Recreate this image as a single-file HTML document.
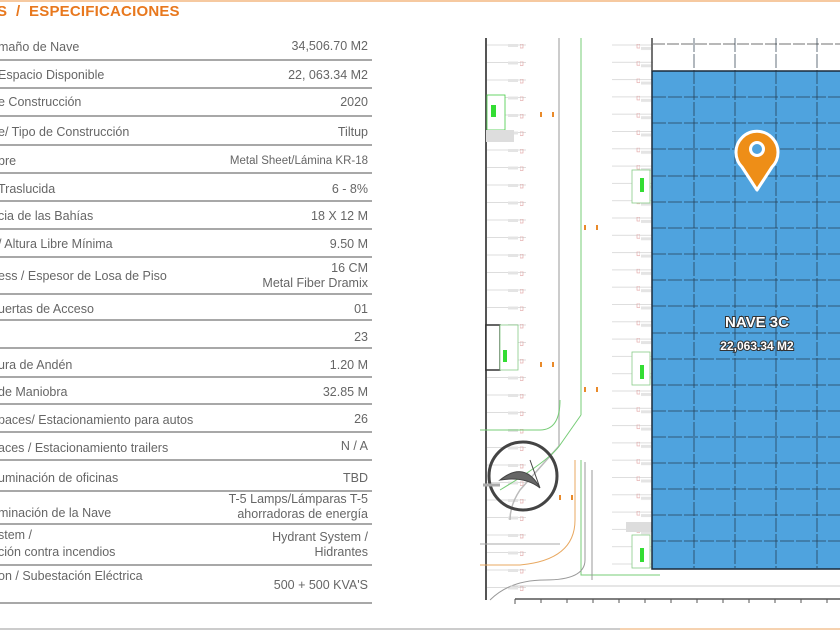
<!DOCTYPE html>
<html><head><meta charset="utf-8"><style>
body{margin:0;width:840px;height:630px;background:#fff;overflow:hidden;position:relative;font-family:"Liberation Sans",sans-serif;}
.top{position:absolute;left:0;top:0;width:840px;height:2px;background:#f6c9a0}
.h{position:absolute;left:-3px;top:3px;font-size:15px;font-weight:bold;color:#e8781e;letter-spacing:0.2px}
.r{position:absolute;left:0;width:372px;border-bottom:2px solid #a8a8a8;color:#666;font-size:12.5px}
.r .l{position:absolute;left:-2px}
.r .v{position:absolute;right:4px;text-align:right;line-height:15px}
</style></head><body>
<div class="top"></div>
<div class="h">S&nbsp; /&nbsp; ESPECIFICACIONES</div>
<div class="r" style="top:30px;height:29px"><span class="l" style="top:10px">maño de Nave</span><span class="v" style="top:9px">34,506.70 M2</span></div>
<div class="r" style="top:61px;height:26px"><span class="l" style="top:7px">Espacio Disponible</span><span class="v" style="top:7px">22, 063.34 M2</span></div>
<div class="r" style="top:89px;height:26px"><span class="l" style="top:6px">e Construcción</span><span class="v" style="top:6px">2020</span></div>
<div class="r" style="top:117px;height:27px"><span class="l" style="top:8px">e/ Tipo de Construcción</span><span class="v" style="top:8px">Tiltup</span></div>
<div class="r" style="top:146px;height:26px"><span class="l" style="top:8px">bre</span><span class="v" style="top:8px;font-size:11.5px">Metal Sheet/Lámina KR-18</span></div>
<div class="r" style="top:174px;height:26px"><span class="l" style="top:8px">Traslucida</span><span class="v" style="top:8px">6 - 8%</span></div>
<div class="r" style="top:202px;height:26px"><span class="l" style="top:7px">cia de las Bahías</span><span class="v" style="top:7px">18 X 12 M</span></div>
<div class="r" style="top:230px;height:26px"><span class="l" style="top:7px">/ Altura Libre Mínima</span><span class="v" style="top:7px">9.50 M</span></div>
<div class="r" style="top:258px;height:35px"><span class="l" style="top:11px">ess / Espesor de Losa de Piso</span><span class="v" style="top:3px">16 CM<br>Metal Fiber Dramix</span></div>
<div class="r" style="top:295px;height:24px"><span class="l" style="top:7px">uertas de Acceso</span><span class="v" style="top:7px">01</span></div>
<div class="r" style="top:321px;height:26px"><span class="v" style="top:9px">23</span></div>
<div class="r" style="top:349px;height:27px"><span class="l" style="top:9px">ura de Andén</span><span class="v" style="top:9px">1.20 M</span></div>
<div class="r" style="top:378px;height:25px"><span class="l" style="top:7px">de Maniobra</span><span class="v" style="top:7px">32.85 M</span></div>
<div class="r" style="top:405px;height:26px"><span class="l" style="top:8px">paces/ Estacionamiento para autos</span><span class="v" style="top:7px">26</span></div>
<div class="r" style="top:433px;height:26px"><span class="l" style="top:8px">aces / Estacionamiento trailers</span><span class="v" style="top:6px">N / A</span></div>
<div class="r" style="top:461px;height:29px"><span class="l" style="top:10px">uminación de oficinas</span><span class="v" style="top:10px">TBD</span></div>
<div class="r" style="top:492px;height:31px"><span class="l" style="top:14px">minación de la Nave</span><span class="v" style="top:0px">T-5 Lamps/Lámparas T-5<br>ahorradoras de energía</span></div>
<div class="r" style="top:525px;height:39px"><span class="l" style="top:2px;line-height:17px">stem /<br>ción contra incendios</span><span class="v" style="top:5px">Hydrant System /<br>Hidrantes</span></div>
<div class="r" style="top:566px;height:36px"><span class="l" style="top:3px">on / Subestación Eléctrica</span><span class="v" style="top:12px">500 + 500 KVA'S</span></div>

<svg width="840" height="630" style="position:absolute;left:0;top:0" xmlns="http://www.w3.org/2000/svg">
<defs>
<pattern id="ps" x="0" y="44" width="40" height="17.3" patternUnits="userSpaceOnUse">
<line x1="0" y1="1" x2="40" y2="1" stroke="#ddd" stroke-width="1"/>
<rect x="1" y="3" width="10" height="3" fill="#e4e4e4"/>
<rect x="37" y="0" width="3" height="4" fill="none" stroke="#e0a0a0" stroke-width="0.6"/>
</pattern>
<pattern id="pl" x="0" y="44" width="40" height="17.5" patternUnits="userSpaceOnUse">
<line x1="0" y1="1" x2="40" y2="1" stroke="#ddd"/>
<rect x="0" y="0" width="3" height="4" fill="none" stroke="#e0a0a0" stroke-width="0.6"/>
<rect x="28" y="0" width="10" height="3" fill="#e4e4e4"/>
</pattern>
</defs>
<rect x="612" y="38" width="41" height="530" fill="url(#ps)"/>
<rect x="486" y="38" width="40" height="560" fill="url(#pl)"/>
<line x1="486" y1="38" x2="486" y2="600" stroke="#555" stroke-width="2"/>
<line x1="559" y1="38" x2="559" y2="446" stroke="#bbb" stroke-width="1.5"/>
<line x1="581" y1="38" x2="581" y2="415" stroke="#7c7" stroke-width="1"/>
<path d="M559 446 L520 490 Q510 505 510 520" fill="none" stroke="#bbb" stroke-width="1.5"/>
<path d="M581 415 L560 445 Q550 460 500 490" fill="none" stroke="#7c7"/>
<path d="M581 460 L581 575 L660 575" fill="none" stroke="#7c7"/>
<path d="M575 460 L575 520 Q575 560 520 565 L480 565" fill="none" stroke="#e8a860"/>
<path d="M585 462 L585 560 Q585 580 545 580 Q510 580 490 600" fill="none" stroke="#999"/>
<path d="M592 470 L592 580" fill="none" stroke="#999"/>
<path d="M480 430 L540 430 Q560 430 560 400" fill="none" stroke="#7c7"/>
<path d="M480 544 L560 544" fill="none" stroke="#aaa"/>
<rect x="487" y="95" width="18" height="35" fill="#fff" stroke="#4c4" stroke-width="0.8"/>
<rect x="491" y="105" width="5" height="12" fill="#3d3"/>
<rect x="486" y="130" width="28" height="12" fill="#ddd"/>
<rect x="486" y="325" width="14" height="45" fill="#fff" stroke="#333" stroke-width="1.5"/>
<rect x="500" y="325" width="18" height="45" fill="#fff" stroke="#8c8" stroke-width="0.8"/>
<rect x="503" y="350" width="4" height="12" fill="#3d3"/>
<rect x="632" y="170" width="18" height="33" fill="#fff" stroke="#8c8" stroke-width="0.8"/>
<rect x="640" y="178" width="4" height="14" fill="#3d3"/>
<rect x="632" y="352" width="18" height="33" fill="#fff" stroke="#8c8" stroke-width="0.8"/>
<rect x="640" y="365" width="4" height="14" fill="#3d3"/>
<rect x="632" y="535" width="18" height="33" fill="#fff" stroke="#8c8" stroke-width="0.8"/>
<rect x="640" y="548" width="4" height="14" fill="#3d3"/>
<rect x="626" y="522" width="26" height="10" fill="#ddd"/>
<g fill="#e98a2a"><rect x="540" y="112" width="2" height="5"/><rect x="552" y="112" width="2" height="5"/><rect x="584" y="225" width="2" height="5"/><rect x="596" y="225" width="2" height="5"/><rect x="540" y="362" width="2" height="5"/><rect x="552" y="362" width="2" height="5"/><rect x="584" y="387" width="2" height="5"/><rect x="596" y="387" width="2" height="5"/><rect x="559" y="495" width="2" height="5"/><rect x="571" y="495" width="2" height="5"/></g>
<circle cx="523" cy="476" r="34" fill="none" stroke="#444" stroke-width="3"/>
<path d="M500 480 Q525 460 540 488 Q525 476 500 480 Z M530 460 L540 488" fill="#666" stroke="#444"/>
<line x1="483" y1="485" x2="500" y2="485" stroke="#aaa" stroke-width="3"/>
<path d="M510 586 L840 586" stroke="#ccc"/>
<path d="M515 599 L840 599" stroke="#555" stroke-width="1.5"/>
<g stroke="#555">
<line x1="515" y1="599" x2="515" y2="604"/><line x1="541" y1="599" x2="541" y2="603"/><line x1="567" y1="599" x2="567" y2="603"/><line x1="593" y1="599" x2="593" y2="603"/><line x1="619" y1="599" x2="619" y2="603"/><line x1="645" y1="599" x2="645" y2="603"/><line x1="671" y1="599" x2="671" y2="603"/><line x1="697" y1="599" x2="697" y2="603"/><line x1="723" y1="599" x2="723" y2="603"/><line x1="749" y1="599" x2="749" y2="603"/><line x1="775" y1="599" x2="775" y2="603"/><line x1="801" y1="599" x2="801" y2="603"/><line x1="827" y1="599" x2="827" y2="603"/></g>
<rect x="652" y="71" width="190" height="498" fill="#4fa3de" stroke="#1a2a3a" stroke-width="1.5"/>
<line x1="653" y1="44" x2="840" y2="44" stroke="#444" stroke-dasharray="12 2" stroke-width="0.8"/>
<line x1="652" y1="38" x2="652" y2="71" stroke="#444" stroke-width="1.5"/>
<g stroke="#203040" stroke-width="0.8" stroke-dasharray="14 2" opacity="0.85">
<line x1="694" y1="38" x2="694" y2="568"/><line x1="735" y1="38" x2="735" y2="568"/><line x1="776" y1="38" x2="776" y2="568"/><line x1="817" y1="38" x2="817" y2="568"/>
<line x1="652" y1="97" x2="840" y2="97"/><line x1="652" y1="123" x2="840" y2="123"/><line x1="652" y1="149" x2="840" y2="149"/><line x1="652" y1="176" x2="840" y2="176"/><line x1="652" y1="202" x2="840" y2="202"/><line x1="652" y1="228" x2="840" y2="228"/><line x1="652" y1="254" x2="840" y2="254"/><line x1="652" y1="280" x2="840" y2="280"/><line x1="652" y1="306" x2="840" y2="306"/><line x1="652" y1="333" x2="840" y2="333"/><line x1="652" y1="359" x2="840" y2="359"/><line x1="652" y1="385" x2="840" y2="385"/><line x1="652" y1="411" x2="840" y2="411"/><line x1="652" y1="437" x2="840" y2="437"/><line x1="652" y1="463" x2="840" y2="463"/><line x1="652" y1="489" x2="840" y2="489"/><line x1="652" y1="515" x2="840" y2="515"/><line x1="652" y1="541" x2="840" y2="541"/>
</g>
<path d="M757 190 L742 167 A21 21 0 1 1 772 167 Z" fill="#ee8e17" stroke="#fff" stroke-width="3" stroke-linejoin="round"/>
<circle cx="757" cy="149" r="8" fill="#fff"/><circle cx="757" cy="149" r="5" fill="#4fa3de"/>
<g font-family="Liberation Sans,sans-serif" font-weight="bold" fill="#fff" text-anchor="middle" style="paint-order:stroke" stroke="#333" stroke-width="2">
<text x="757" y="327" font-size="15">NAVE 3C</text>
<text x="757" y="350" font-size="12">22,063.34 M2</text>
</g>
<line x1="0" y1="629" x2="620" y2="629" stroke="#ccc" stroke-width="2"/>
<line x1="620" y1="629" x2="840" y2="629" stroke="#f6d2b0" stroke-width="2"/>
</svg>
</body></html>
